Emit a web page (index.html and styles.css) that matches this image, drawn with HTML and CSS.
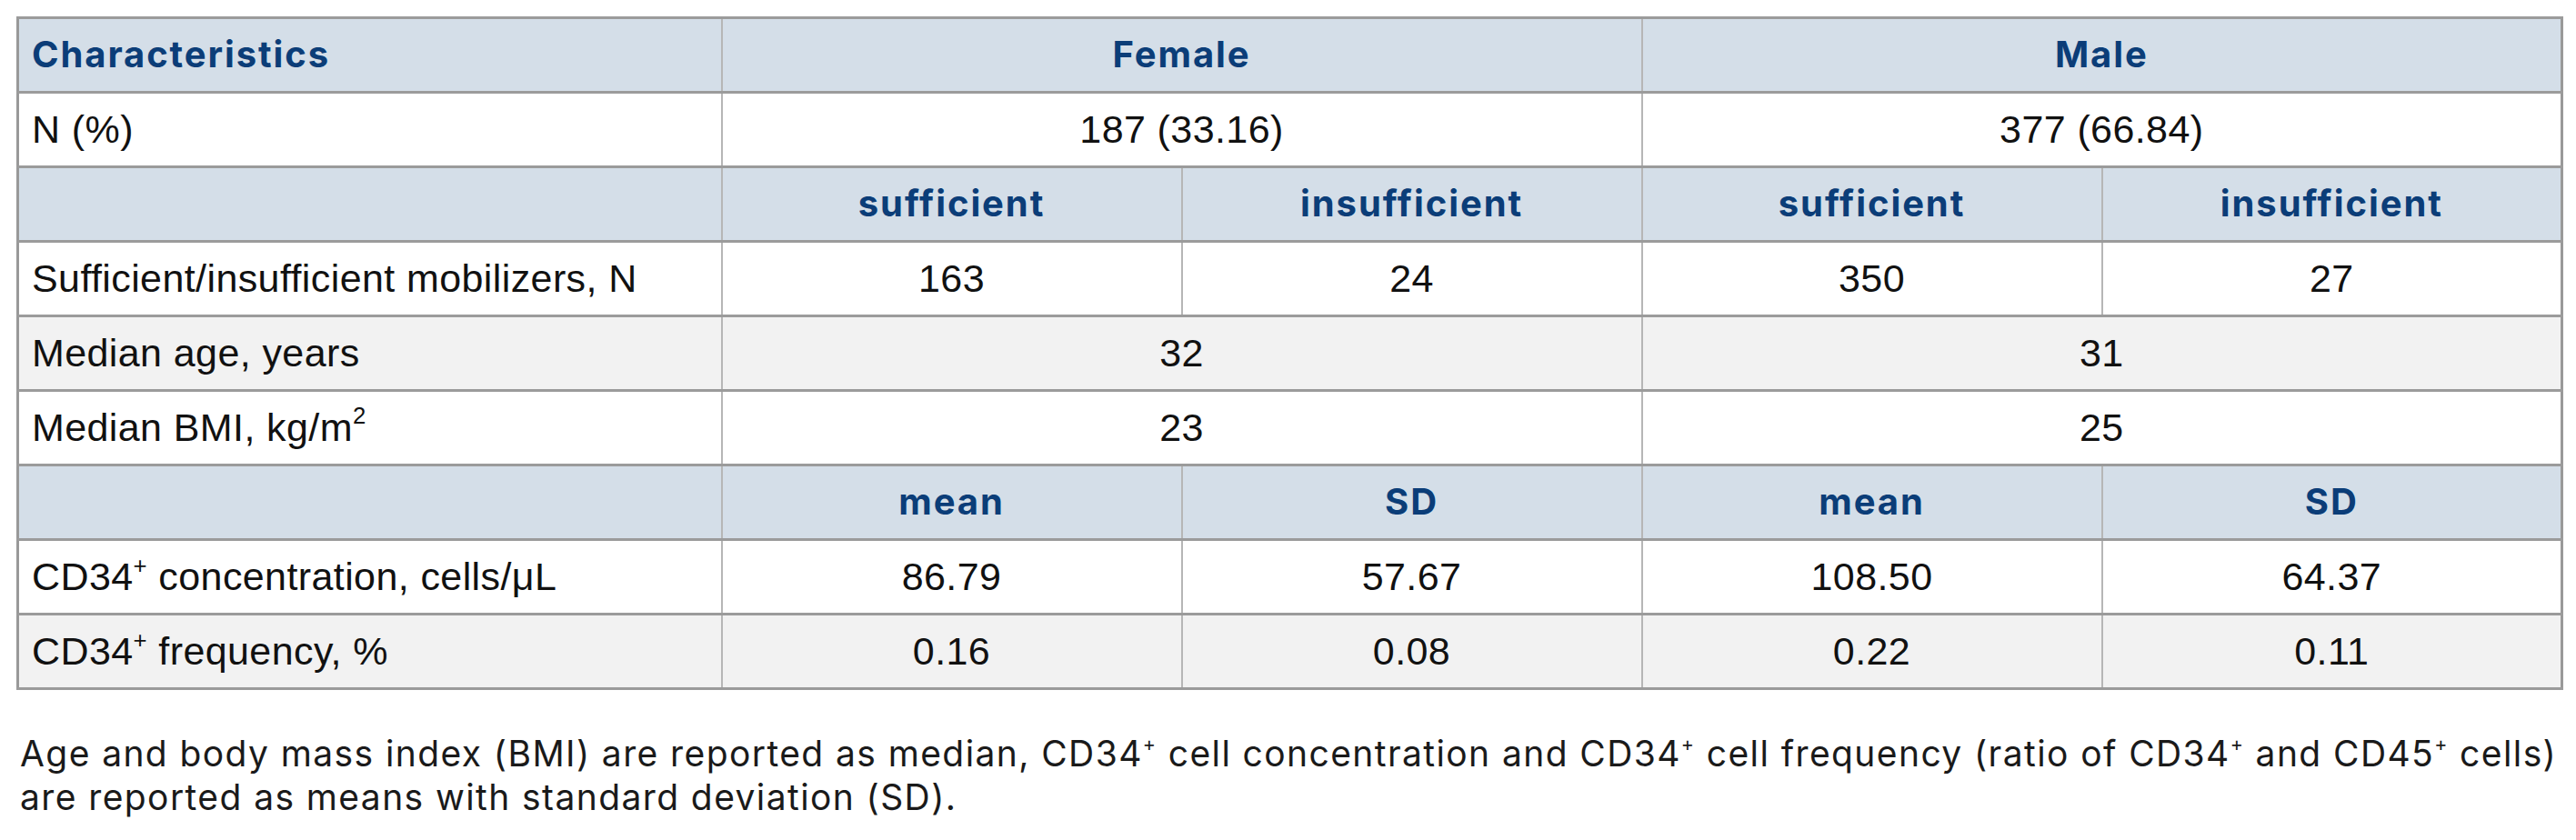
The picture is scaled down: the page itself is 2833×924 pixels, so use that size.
FILE: index.html
```html
<!DOCTYPE html>
<html lang="en">
<head>
<meta charset="utf-8">
<title>Characteristics table</title>
<link rel="stylesheet" href="styles.css">
</head>
<body>
<div class="wrap">
  <table class="tbl">
    <colgroup>
      <col class="c-label">
      <col class="c-val">
      <col class="c-val">
      <col class="c-val">
      <col class="c-val">
    </colgroup>
    <tr class="row-head">
      <th class="lbl">Characteristics</th>
      <th colspan="2">Female</th>
      <th colspan="2">Male</th>
    </tr>
    <tr class="row-white">
      <td class="lbl">N (%)</td>
      <td colspan="2">187 (33.16)</td>
      <td colspan="2">377 (66.84)</td>
    </tr>
    <tr class="row-head">
      <th class="lbl"></th>
      <th>sufficient</th>
      <th>insufficient</th>
      <th>sufficient</th>
      <th>insufficient</th>
    </tr>
    <tr class="row-white">
      <td class="lbl">Sufficient/insufficient mobilizers, N</td>
      <td>163</td>
      <td>24</td>
      <td>350</td>
      <td>27</td>
    </tr>
    <tr class="row-grey">
      <td class="lbl">Median age, years</td>
      <td colspan="2">32</td>
      <td colspan="2">31</td>
    </tr>
    <tr class="row-white">
      <td class="lbl">Median BMI, kg/m<sup class="sq">2</sup></td>
      <td colspan="2">23</td>
      <td colspan="2">25</td>
    </tr>
    <tr class="row-head">
      <th class="lbl"></th>
      <th>mean</th>
      <th>SD</th>
      <th>mean</th>
      <th>SD</th>
    </tr>
    <tr class="row-white">
      <td class="lbl">CD34<sup class="plus">+</sup> concentration, cells/μL</td>
      <td>86.79</td>
      <td>57.67</td>
      <td>108.50</td>
      <td>64.37</td>
    </tr>
    <tr class="row-grey">
      <td class="lbl">CD34<sup class="plus">+</sup> frequency, %</td>
      <td>0.16</td>
      <td>0.08</td>
      <td>0.22</td>
      <td>0.11</td>
    </tr>
  </table>
  <p class="note">Age and body mass index (BMI) are reported as median, CD34<sup class="nplus">+</sup> cell concentration and CD34<sup class="nplus">+</sup> cell frequency (ratio of CD34<sup class="nplus">+</sup> and CD45<sup class="nplus">+</sup> cells)<br>are reported as means with standard deviation (SD).</p>
</div>
</body>
</html>
```
FILE: styles.css
```css
html, body {
  margin: 0;
  padding: 0;
  background: #ffffff;
}

.wrap {
  padding: 18px 0 0 18px;
}

.tbl {
  border-collapse: collapse;
  table-layout: fixed;
  width: 2798px;
  border: 3px solid #999999;
  font-family: "Liberation Sans", Arial, sans-serif;
  font-size: 43px;
  letter-spacing: 0.4px;
  color: #111111;
}

.c-label { width: 774px; }
.c-val { width: 506px; }

.tbl tr {
  height: 82px;
}

.tbl th,
.tbl td {
  padding: 0 14px;
  text-align: center;
  vertical-align: middle;
  border-top: 3px solid #9b9b9b;
  border-bottom: 3px solid #9b9b9b;
  border-left: 2px solid #b6b6b6;
  border-right: 2px solid #b6b6b6;
  white-space: nowrap;
}

.tbl .lbl {
  text-align: left;
}

.row-head th {
  background: #d4dee8;
  color: #0b3d78;
  font-family: Inter, "Liberation Sans", sans-serif;
  font-weight: 700;
  font-size: 40px;
  letter-spacing: 1.9px;
  padding-bottom: 2px;
}

.row-white td {
  background: #ffffff;
}

.row-grey td {
  background: #f2f2f2;
}

.plus {
  font-size: 0.6em;
  vertical-align: 0.7em;
  line-height: 0;
}

.sq {
  font-size: 0.6em;
  vertical-align: 0.75em;
  line-height: 0;
}

.note {
  margin: 46px 0 0 4px;
  font-family: Inter, "Liberation Sans", sans-serif;
  font-size: 39px;
  letter-spacing: 1.4px;
  line-height: 48px;
  color: #1a1a1a;
  white-space: nowrap;
}

.nplus {
  font-size: 0.55em;
  vertical-align: 0.8em;
  line-height: 0;
}
```
